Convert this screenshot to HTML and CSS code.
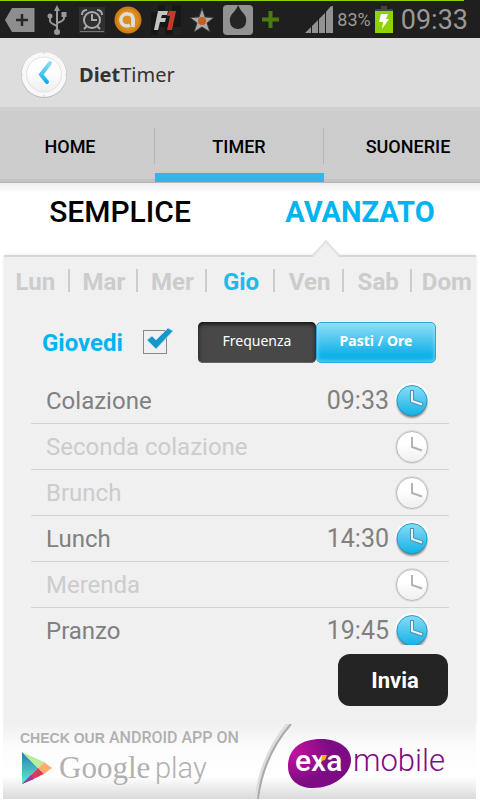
FILE: index.html
```html
<!DOCTYPE html>
<html lang="it">
<head>
<meta charset="UTF-8">
<meta name="viewport" content="width=device-width, initial-scale=1.0">
<title>DietTimer</title>
<link rel="stylesheet" href="styles.css">
</head>
<body>
<!-- shared icons -->
<svg class="defs" width="0" height="0" aria-hidden="true">
    <defs>
        <linearGradient id="blue" x1="0" y1="0" x2="0" y2="1">
            <stop offset="0" stop-color="#8adcf7"/>
            <stop offset="1" stop-color="#12b2e6"/>
        </linearGradient>
        <linearGradient id="white" x1="0" y1="0" x2="0" y2="1">
            <stop offset="0.4" stop-color="#fff"/>
            <stop offset="1" stop-color="#eee"/>
        </linearGradient>
        <linearGradient id="hand" gradientUnits="userSpaceOnUse" x1="0" y1="12" x2="0" y2="32">
            <stop offset="0" stop-color="#8adcf7"/>
            <stop offset="1" stop-color="#0cace4"/>
        </linearGradient>
        <radialGradient id="shade">
            <stop offset="0.8" stop-color="#777"/>
            <stop offset="1" stop-color="#999" stop-opacity="0"/>
        </radialGradient>
    </defs>
    <symbol id="clock-on" viewBox="0 0 36 36">
        <circle cx="18" cy="17" r="17" fill="#fff" opacity=".8"/>
        <circle cx="18" cy="19.5" r="17" fill="url(#shade)"/>
        <circle cx="18" cy="17.5" r="15" fill="url(#blue)" stroke="#1ba3d1"/>
        <path d="M18 7v11l11 4" fill="none" stroke="#4a94ae" stroke-width="4"/>
        <path d="M18 8v10l10 3.5" fill="none" stroke="#e8f4f8" stroke-width="2"/>
    </symbol>
    <symbol id="clock-off" viewBox="0 0 36 36">
        <circle cx="18" cy="18" r="17" fill="#ddd"/>
        <circle cx="18" cy="18" r="15.5" fill="url(#white)" stroke="#bbb"/>
        <path d="M18 8v10l10 3.5" fill="none" stroke="#b3b3b3" stroke-width="2"/>
    </symbol>
</svg>

<div class="statusbar">
    <div class="notifications">
        <svg width="30" height="24" viewBox="0 0 30 24"><path d="M0 12L7 0H29.5V24H7Z" fill="#8e8e8e"/><path d="M17 6v12M11 12h12" stroke="#262626" stroke-width="2.5"/></svg>
        <svg class="usb" width="20" height="30" viewBox="0 0 20 30" fill="none" stroke="#999" stroke-width="2"><path d="M10 3v23M3 11v5q0 2 7 5M17 10v3q0 3-7 5"/><path d="M10 0l3 6H7z" fill="#999" stroke="none"/><circle cx="10" cy="27" r="3" fill="#999" stroke="none"/><circle cx="3" cy="11" r="2.5" fill="#999" stroke="none"/><path d="M14.5 7h5v5h-5z" fill="#999" stroke="none"/></svg>
        <svg width="26" height="26" viewBox="0 0 26 26"><rect width="26" height="26" fill="#303030"/><g fill="none" stroke="#aaa" stroke-width="2"><circle cx="13" cy="13" r="8"/><path d="M13 7v6h5M8 19l-3 3M18 19l3 3M3 8q0-5 5-5M18 3q5 0 5 5"/></g><path d="M1 24.5h24" stroke="#777"/></svg>
        <svg width="28" height="28" viewBox="0 0 28 28"><circle cx="14" cy="14" r="13.5" fill="#ce7d12"/><circle cx="14" cy="14" r="11" fill="#dc8d1d"/><path d="M19 19V12q-1-4-5-4a6 6 0 1 0 2 11" fill="none" stroke="#ddd" stroke-width="3.5"/><path d="M19 12v9" stroke="#ddd" stroke-width="3.5"/></svg>
        <svg width="30" height="30" viewBox="0 0 30 30"><path d="M0 0h30v30H0z" fill="#171717"/><path d="M0 0h7v7H0zM14 0h7v7h-7zM22 22h8v8h-8zM7 22h7v8H7z" fill="#222"/><path d="M7 6h10l-1 4h-5l-1 3h5l-1 4H9l-2 8H3z" fill="#c4c4c4"/><path d="M18 6h7l-4 19h-5l3-14h-3z" fill="#c23a2b"/></svg>
        <svg width="24" height="24" viewBox="0 0 24 24"><path d="M12 0l3 9 9 .5-7 5.5 3 9-8-5-8 5 3-9-7-5.5L9 9z" fill="#aaa" stroke="#3c3c3c"/><circle cx="12" cy="13" r="4" fill="#c75e1d"/></svg>
        <svg width="30" height="30" viewBox="0 0 30 30"><rect width="30" height="30" rx="4" fill="#929292"/><path d="M15 0q2 5 6 9 3 4 2 8a8 7 0 0 1-16 0q-1-4 2-8 5-5 6-9z" fill="#252525"/></svg>
        <svg width="17" height="17" viewBox="0 0 17 17"><path d="M8.5 0v17M0 8.5h17" stroke="#4a7a10" stroke-width="4"/></svg>
    </div>
    <div class="system">
        <svg width="28" height="27" viewBox="0 0 28 27" fill="#929292"><path d="M0 27L6 21v6zM7 20l6-6v13H7zM14 13l6-6v20h-6zM21 6l4-5q1-1 3-1v27h-7z"/></svg>
        <span class="percent">83%</span>
        <svg width="18" height="27" viewBox="0 0 18 27"><path d="M6 0h6v3h6v2H0V3h6z" fill="#444"/><path d="M0 5h18v22H0z" fill="#8fd400"/><path d="M6 8h7l-2 5h3l-7 10 1-7H4z" fill="#fff"/></svg>
        <span class="time">09:33</span>
    </div>
</div>

<header class="appbar">
    <svg width="48" height="48" viewBox="0 0 48 48">
        <circle cx="24" cy="24" r="23" fill="#bbb"/>
        <circle cx="24" cy="23.5" r="22.5" fill="#f8f8f8"/>
        <circle cx="24" cy="23.5" r="17.5" fill="url(#white)" stroke="#e2e2e2"/>
        <path d="M24 1v2M24 44v2M1 24h2M45 24h2" stroke="#ccc"/>
        <path d="M30 12L21 23.5L27 31" fill="none" stroke="url(#hand)" stroke-width="4" stroke-linecap="round"/>
    </svg>
    <h1><b>Diet</b>Timer</h1>
</header>

<nav class="tabs">
    <a href="#home">HOME</a>
    <a href="#timer" class="active">TIMER</a>
    <a href="#suonerie">SUONERIE</a>
</nav>

<main>
    <nav class="modes">
        <a href="#semplice">SEMPLICE</a>
        <a href="#avanzato" class="active">AVANZATO<svg class="pointer" width="36" height="18" viewBox="0 0 36 18"><path d="M5 17L18 3L31 17" fill="#f0f0f0" stroke="#e2e2e2" stroke-width="3"/><path d="M5 18L18 4L31 18z" fill="#f0f0f0"/></svg></a>
    </nav>

    <section class="panel">
        <nav class="days">
            <a href="#lun">Lun</a>
            <a href="#mar">Mar</a>
            <a href="#mer">Mer</a>
            <a href="#gio" class="active">Gio</a>
            <a href="#ven">Ven</a>
            <a href="#sab">Sab</a>
            <a href="#dom">Dom</a>
        </nav>

        <div class="controls">
            <label for="day-on">Giovedi</label>
            <span class="check">
                <input type="checkbox" id="day-on" checked>
                <svg width="28" height="24" viewBox="0 0 28 24"><path d="M1 13l5-4 4 4L22 1l5 3L10 22z" fill="#1598c9" stroke="#a5dcf0"/></svg>
            </span>
            <div class="switch">
                <button type="button">Frequenza</button>
                <button type="button" class="active">Pasti / Ore</button>
            </div>
        </div>

        <ul class="meals">
            <li class="on"><span>Colazione</span><time>09:33</time><button type="button" aria-label="Colazione"><svg width="36" height="36"><use href="#clock-on"/></svg></button></li>
            <li><span>Seconda colazione</span><button type="button" aria-label="Seconda colazione"><svg width="36" height="36"><use href="#clock-off"/></svg></button></li>
            <li><span>Brunch</span><button type="button" aria-label="Brunch"><svg width="36" height="36"><use href="#clock-off"/></svg></button></li>
            <li class="on"><span>Lunch</span><time>14:30</time><button type="button" aria-label="Lunch"><svg width="36" height="36"><use href="#clock-on"/></svg></button></li>
            <li><span>Merenda</span><button type="button" aria-label="Merenda"><svg width="36" height="36"><use href="#clock-off"/></svg></button></li>
            <li class="on"><span>Pranzo</span><time>19:45</time><button type="button" aria-label="Pranzo"><svg width="36" height="36"><use href="#clock-on"/></svg></button></li>
        </ul>

        <button type="button" class="send">Invia</button>
    </section>

    <a class="banner" href="#ad">
        <svg viewBox="0 0 473 75">
            <defs>
                <linearGradient id="band" x1="0" y1="0" x2="0" y2="1">
                    <stop offset="0" stop-color="#f0f0f0"/>
                    <stop offset="0.3" stop-color="#fcfcfc"/>
                    <stop offset="0.7" stop-color="#fff"/>
                    <stop offset="1" stop-color="#dadada"/>
                </linearGradient>
                <linearGradient id="play" x1="0" y1="0" x2="0" y2="1">
                    <stop offset="0" stop-color="#2878ad"/>
                    <stop offset="1" stop-color="#5ff0d0"/>
                </linearGradient>
                <radialGradient id="exa" cx="0.1" cy="0.3" r="0.6">
                    <stop offset="0" stop-color="#c4109f"/>
                    <stop offset="1" stop-color="#7d0c84"/>
                </radialGradient>
            </defs>
            <rect width="473" height="75" fill="url(#band)"/>
            <path d="M286 0Q259 32 254 75" fill="none" stroke="#ddd" stroke-width="5"/>
            <path d="M288 0Q260 32 255 75" fill="none" stroke="#aaa" stroke-width="2"/>
            <path d="M290 0Q262 32 256 75H473V0z" fill="url(#band)"/>
            <g fill="#b0b0b0">
                <text x="17" y="19" class="check-out">CHECK OUR</text>
                <text x="106" y="19" class="check-out thin">ANDROID APP ON</text>
                <text x="56" y="54" class="google">Google</text>
                <text x="152" y="54" class="play">play</text>
            </g>
            <path d="M19 28v32L35 44z" fill="url(#play)"/>
            <path d="M19 28L41 38 35 44z" fill="#b8ed9c"/>
            <path d="M41 38L49 44 41 50 35 44z" fill="#ffad6b"/>
            <path d="M35 44L41 50 29 55z" fill="#d93b5e"/>
            <path d="M19 60L30 49 35 44 37 52z" fill="#d93b5e"/>
            <path d="M19 60L28 51 31 55z" fill="#9c38a5"/>
            <path d="M285 42C285 25 298 15 318 15C337 15 348 25 348 36C348 50 331 64 310 64C295 64 285 56 285 42z" fill="url(#exa)"/>
            <text x="292" y="47" class="exa">exa</text>
            <path d="M319 31h5l-2 5-4 1z" fill="#ffb400"/>
            <text x="350" y="47" class="mobile">mobile</text>
        </svg>
    </a>
</main>
</body>
</html>
```
FILE: styles.css
```css
:root{
    --accent:#00b4f0;
    --panel:#f0f0f0;
    --muted:#ccc;
}
*{box-sizing:border-box;margin:0;padding:0;}
body{
    font-family:Roboto,sans-serif;
    background:#fff;
    overflow-x:hidden;
}
a{
    color:inherit;
    text-decoration:none;
}
button{
    font-family:inherit;
    border:none;
    cursor:pointer;
}
svg{
    display:block;
    flex:none;
}
.defs{
    position:absolute;
}

/* status bar */
.statusbar{
    display:flex;
    justify-content:space-between;
    height:38px;
    padding:1px 12px 0 5px;
    background:linear-gradient(#8fd400,#8fd400) 0 0/calc(100% - 16px) 1px no-repeat #1f1f1f;
    color:#999;
}
.notifications,
.system{
    display:flex;
    align-items:center;
}
.notifications{
    gap:9px;
}
.usb{
    margin:0 3px;
}
.system{
    gap:4px;
}
.percent{
    font-size:18px;
}
.time{
    font-size:27px;
    margin-left:4px;
}

/* title bar */
.appbar{
    display:flex;
    align-items:center;
    gap:11px;
    height:69px;
    padding:4px 20px 0;
    background:#ddd;
}
.appbar h1{
    font-family:"Noto Sans","Open Sans",sans-serif;
    font-size:20px;
    line-height:24px;
    font-weight:400;
    color:#333;
}

/* scrolling tabs */
.tabs{
    display:flex;
    justify-content:center;
    height:76px;
    padding-right:2px;
    overflow:hidden;
    background:#ccc;
    border-top:4px solid #d0d0d0;
    border-bottom:1px solid #b5b5b5;
}
.tabs a{
    display:flex;
    flex:0 0 169px;
    align-items:center;
    justify-content:center;
    padding-top:3px;
    border-bottom:3px solid #c2c2c2;
    font-size:18px;
    font-weight:500;
    color:#000;
    background:linear-gradient(#b5b5b5,#b5b5b5) 100% 17px/1px 36px no-repeat;
}
.tabs .active{
    padding-top:9px;
    border-bottom:9px solid #33b5e5;
}

/* simple / advanced */
.modes{
    display:flex;
    height:72px;
    background:linear-gradient(#eee,#fff 10px);
}
.modes a{
    position:relative;
    flex:1;
    padding-top:11px;
    text-align:center;
    font-size:30px;
    line-height:36px;
    font-weight:500;
    color:#000;
}
.modes .active{
    font-size:29px;
    font-weight:700;
    color:var(--accent);
}
.pointer{
    position:absolute;
    left:68px;
    bottom:-2px;
}

.panel{
    margin:0 4px;
    padding-bottom:18px;
    background:var(--panel);
    border-top:2px solid #d8d8d8;
    box-shadow:0 0 3px #e4e4e4;
}
.days{
    display:flex;
    margin:0 -5px 0 -3px;
    padding-top:12px;
}
.days a{
    flex:1;
    text-align:center;
    font-size:24px;
    line-height:26px;
    font-weight:700;
    color:var(--muted);
    background:linear-gradient(#ccc,#ccc) 100% 0/2px 23px no-repeat;
}
.days a:last-child{
    background:none;
}
.days .active{
    color:#1bbde8;
}

.controls{
    display:flex;
    align-items:center;
    padding:27px 40px 0 38px;
}
.controls label{
    font-size:24px;
    line-height:28px;
    font-weight:700;
    color:var(--accent);
}
.check{
    position:relative;
    height:26px;
    margin-left:20px;
}
.check input{
    display:block;
    appearance:none;
    width:24px;
    height:24px;
    border:1px solid #888;
}
.check svg{
    position:absolute;
    left:3px;
    top:-3px;
    pointer-events:none;
}
.check input:not(:checked) + svg{
    display:none;
}
.switch{
    display:flex;
    width:238px;
    margin-left:auto;
}
.switch button{
    flex:1;
    height:41px;
    padding-bottom:4px;
    border-radius:5px;
    font-family:"Noto Sans","Open Sans",sans-serif;
    font-size:14px;
    color:#fff;
    background:#484848;
    box-shadow:inset 0 2px 4px #111,inset 0 -1px 1px #777;
}
.switch .active{
    font-weight:700;
    background:linear-gradient(#92def7,#12b2e8 80%);
    border:1px solid #2aa9d3;
    box-shadow:inset 0 0 4px #8fe0fa;
}

.meals{
    height:267px;
    margin:15px 27px 0;
    overflow:hidden;
    list-style:none;
}
.meals li{
    display:flex;
    align-items:center;
    height:46px;
    padding:0 19px 0 15px;
    border-bottom:1px solid #d3d3d3;
    font-size:24px;
    color:var(--muted);
}
.meals span{
    flex:1;
}
.meals time{
    font-size:25px;
}
.meals .on{
    color:#808080;
}
.meals button{
    margin-left:5px;
    background:none;
}

.send{
    display:block;
    width:110px;
    height:52px;
    margin:9px 28px 0 auto;
    padding-left:4px;
    border-radius:12px;
    font-size:22px;
    font-weight:700;
    color:#fff;
    background:#242424;
}

/* ad */
.banner{
    display:block;
    margin:0 4px 0 3px;
}
.banner svg{
    width:100%;
}
.check-out{
    font:700 14px "Liberation Sans",sans-serif;
}
.check-out.thin{
    font:500 16px Roboto,sans-serif;
}
.google{
    font:31px "Liberation Serif",serif;
}
.play{
    font:300 29px Roboto,sans-serif;
}
.exa{
    font:500 30px Roboto,sans-serif;
    fill:#fff;
}
.mobile{
    font:300 31px Roboto,sans-serif;
    fill:#7d0c84;
}
```
